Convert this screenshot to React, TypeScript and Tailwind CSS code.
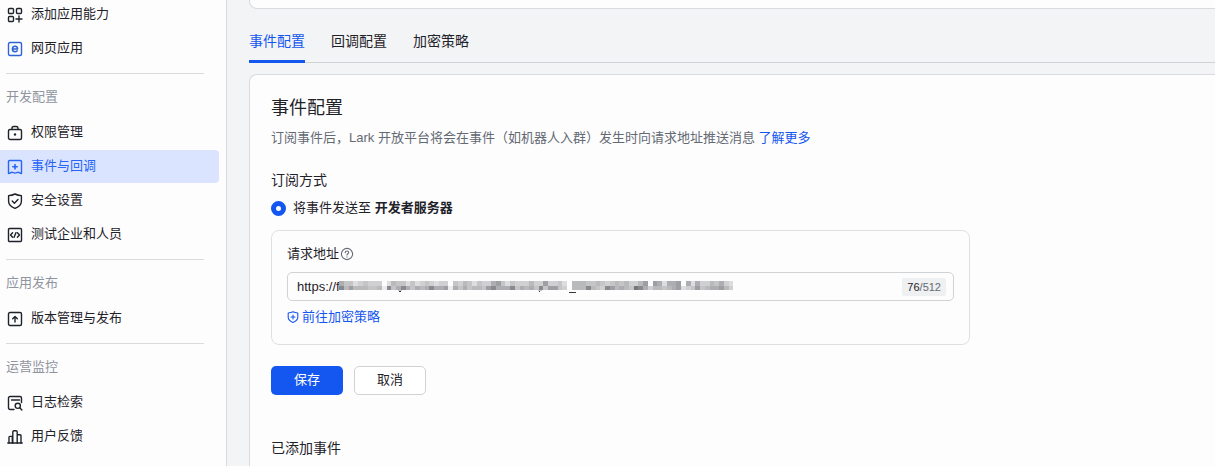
import { useState } from 'react';
import type { ReactNode } from 'react';

type NavItem = { label: string; icon: ReactNode; color?: string };

const icons = {
  add: (
    <>
      <rect x="1.5" y="1.5" width="5" height="5" rx="1" />
      <rect x="9.5" y="1.5" width="5" height="5" rx="1" />
      <rect x="1.5" y="9.5" width="5" height="5" rx="1" />
      <path d="M12 9v6M9 12h6" />
    </>
  ),
  web: (
    <>
      <rect x="1.5" y="1.5" width="13" height="13" rx="1.5" />
      <path d="M5.4 8h5.2c0-1.700-1-2.700-2.600-2.700S5.400 6.400 5.400 8s1 2.700 2.700 2.700c.9 0 1.600-.3 2.100-.9" strokeWidth="1.6" />
    </>
  ),
  permission: (
    <>
      <rect x="1.5" y="4.5" width="13" height="10" rx="1.5" />
      <path d="M5 4.5V3.200C5 2 5.800 1.500 6.800 1.500h2.400C10.200 1.500 11 2 11 3.200v1.300" />
      <circle cx="8" cy="9.500" r="1.200" fill="currentColor" stroke="none" />
    </>
  ),
  event: (
    <>
      <path d="M2.500 1.500h11a1 1 0 0 1 1 1v12c-1.600 0-2-1.200-3.200-1.200-1.400 0-1.800.8-3.300.8s-1.900-.8-3.300-.8c-1.200 0-1.600 1.200-3.200 1.200v-12a1 1 0 0 1 1-1z" />
      <path d="M8 5.500v4.400M5.800 7.700h4.400" strokeWidth="1.600" />
    </>
  ),
  shield: (
    <>
      <path d="M8 1c2 1 4.200 1.500 6.400 1.600v5.600c0 3.200-2.700 5.600-6.400 7.200-3.700-1.600-6.400-4-6.400-7.200V2.600C3.800 2.500 6 2 8 1z" />
      <path d="M5.200 8l2.200 2.200 3.600-3.800" />
    </>
  ),
  test: (
    <>
      <rect x="1.500" y="1.500" width="13" height="13" rx="1" />
      <path d="M5.600 5.700L3.500 8l2.100 2.300M10.400 5.700L12.500 8l-2.100 2.300M8.900 5.700l-1.800 4.600" />
    </>
  ),
  release: (
    <>
      <rect x="1.500" y="1.500" width="13" height="13" rx="1.500" />
      <path d="M8 11V5.500M5.700 7.700L8 5.400l2.300 2.300" />
    </>
  ),
  log: (
    <>
      <path d="M7 14.500H3A1.500 1.500 0 0 1 1.500 13V3A1.500 1.500 0 0 1 3 1.500h10A1.500 1.500 0 0 1 14.500 3v4.500M4.500 5h8" />
      <circle cx="10.800" cy="10.800" r="2.600" />
      <path d="M12.700 12.700l2.200 2.200" />
    </>
  ),
  feedback: (
    <>
      <path d="M.8 14h14.400" />
      <path d="M2 14V8.200c0-.5.3-.8.800-.8h2.500V14M5.800 14V3c0-.8.5-1.200 1.200-1.200h2c.7 0 1.200.4 1.200 1.200v11M10.500 5.800h2.700c.5 0 .8.300.8.800V14" />
    </>
  ),
};

const groups: { title?: string; items: NavItem[] }[] = [
  {
    items: [
      { label: '添加应用能力', icon: icons.add },
      { label: '网页应用', icon: icons.web, color: 'text-[#2f62d4]' },
    ],
  },
  {
    title: '开发配置',
    items: [
      { label: '权限管理', icon: icons.permission },
      { label: '事件与回调', icon: icons.event },
      { label: '安全设置', icon: icons.shield },
      { label: '测试企业和人员', icon: icons.test },
    ],
  },
  {
    title: '应用发布',
    items: [{ label: '版本管理与发布', icon: icons.release }],
  },
  {
    title: '运营监控',
    items: [
      { label: '日志检索', icon: icons.log },
      { label: '用户反馈', icon: icons.feedback },
    ],
  },
];

const tabs = ['事件配置', '回调配置', '加密策略'];

// Grey levels for the masked part of the URL, one digit per cell
const shades = ['none', '#ececee', '#dddde0', '#d0d0d2', '#c5c5c7', '#b9babc', '#adaeb1', '#9e9fa3', '#898a8e', '#76777b'];
const maskRows = [
  '64423433302544242343233043542433674243335337334205554454345453357076266706263354632',
  '85755544518468646568667164645547866684656484774305558543875654986355456723474566753',
];

function Icon({ children }: { children: ReactNode }) {
  return (
    <svg
      className="size-4 shrink-0"
      viewBox="0 0 16 16"
      fill="none"
      stroke="currentColor"
      strokeWidth="1.4"
      strokeLinecap="round"
      strokeLinejoin="round"
      aria-hidden="true"
    >
      {children}
    </svg>
  );
}

function UrlMask() {
  return (
    <svg
      className="pointer-events-none absolute left-[51px] top-2 h-3 w-[396px]"
      viewBox="0 0 396 12"
      aria-hidden="true"
    >
      <g shapeRendering="crispEdges">
        {maskRows.map((row, y) =>
          row.split('').map((level, x) => (
            <rect key={`${x}-${y}`} x={x * 4.75} y={y === 0 ? 0 : 5} width="4.75" height={y === 0 ? 5 : 4} fill={shades[Number(level)]} />
          ))
        )}
        <path d="M59 9h4v1h-4zM199 9h4v1h-4z" fill="#c5c5c7" />
        <path d="M60 10h2v1h-2zM200 10h1v1h-1zM230 11h7v1h-7z" fill="#33353a" />
      </g>
    </svg>
  );
}

export default function App() {
  const [active, setActive] = useState('事件配置');
  const [url, setUrl] = useState('https://f');

  return (
    <div className="flex min-h-screen overflow-hidden bg-[#f3f4f6] font-['Liberation_Sans','Noto_Sans_CJK_SC',sans-serif] text-[13px] leading-5 text-[#1f2329]">
      {/* Sidebar */}
      <nav className="w-[227px] shrink-0 border-r border-[#d9dbde] bg-[#fdfdfe]">
        <div className="-mt-0.5">
          {groups.map((group, i) => (
            <div key={i}>
              {group.title && (
                <>
                  <hr className="mt-2 mr-[22px] ml-1.5 border-[#d9dbde]" />
                  <h2 className="flex h-[42px] items-center pt-1 pl-1.5 text-[#8f959e]">{group.title}</h2>
                </>
              )}
              <ul className="flex flex-col gap-px">
                {group.items.map((item) => {
                  const current = item.label === '事件与回调';
                  return (
                    <li key={item.label}>
                      <a
                        href="#"
                        aria-current={current ? 'page' : undefined}
                        className={`mr-[7px] flex h-[33px] items-center gap-2 rounded-r pb-0.5 pl-[7px] ${
                          current ? 'bg-[#dae4ff] text-[#2864f5]' : ''
                        }`}
                      >
                        <span className={`pt-0.5 ${item.color ?? ''}`}>
                          <Icon>{item.icon}</Icon>
                        </span>
                        {item.label}
                      </a>
                    </li>
                  );
                })}
              </ul>
            </div>
          ))}
        </div>
      </nav>

      {/* Content */}
      <main className="flex min-w-0 flex-1 flex-col pl-[22px]">
        <div className="h-[9px] shrink-0 rounded-bl-lg border-b border-l border-[#d9dbde] bg-[#fdfdfe]" />

        <div role="tablist" className="flex h-[54px] shrink-0 items-end gap-[26px] border-b border-[#d0d3d6] text-[14px]">
          {tabs.map((tab) => (
            <button
              key={tab}
              role="tab"
              aria-selected={active === tab}
              onClick={() => setActive(tab)}
              className={`-mb-px h-8 rounded-t-xs border-b-3 pb-2.5 ${
                active === tab ? 'border-[#1456f0] text-[#1456f0]' : 'border-transparent'
              }`}
            >
              {tab}
            </button>
          ))}
        </div>

        <section className="mt-[11px] flex-1 rounded-tl-lg border-t border-l border-[#d9dbde] bg-[#fdfdfe] pt-[21px] pr-5 pl-[21px]">
          <h1 className="text-[18px] leading-6">事件配置</h1>
          <p className="mt-2 text-[#646a73]">
            订阅事件后，Lark 开放平台将会在事件（如机器人入群）发生时向请求地址推送消息{' '}
            <a href="#" className="text-[#1456f0]">了解更多</a>
          </p>

          <h2 className="mt-[22px] text-[14px]">订阅方式</h2>
          <label className="mt-2 flex items-center gap-[7px]">
            <input
              type="radio"
              name="mode"
              defaultChecked
              className="size-[15px] appearance-none rounded-full border-5 border-[#1456f0] bg-white"
            />
            <span>
              将事件发送至 <b>开发者服务器</b>
            </span>
          </label>

          <div className="mt-3 max-w-[699px] rounded-lg border border-[#dee0e3] px-[15px] pt-[13px] pb-[17px]">
            <div className="flex items-center gap-px">
              <label htmlFor="url">请求地址</label>
              <svg className="size-3.5 text-[#646a73]" viewBox="0 0 14 14" fill="none" stroke="currentColor" strokeWidth="1.1" strokeLinecap="round" aria-hidden="true">
                <circle cx="7" cy="7" r="5.600" />
                <path d="M5.300 5.700c0-1 .7-1.700 1.700-1.700s1.700.6 1.700 1.500c0 1.200-1.700 1.200-1.700 2.400M7 9.900v.1" />
              </svg>
            </div>
            <div className="relative mt-2 flex h-[29px] items-center rounded-[5px] border border-[#d0d3d6] pr-[7px] pl-[9px]">
              <input
                id="url"
                value={url}
                onChange={(e) => setUrl(e.target.value)}
                className="min-w-0 flex-1 bg-transparent outline-none"
              />
              <UrlMask />
              <span className="rounded-xs bg-[#eff0f1] px-[5px] text-[11px] leading-[18px] text-[#646a73]">
                <span className="text-[#1f2329]">76</span>/512
              </span>
            </div>
            <a href="#" className="mt-1.5 flex items-center gap-[3px] text-[#1456f0]">
              <svg className="size-3" viewBox="0 0 12 12" fill="none" stroke="currentColor" strokeWidth="1.1" strokeLinecap="round" strokeLinejoin="round" aria-hidden="true">
                <path d="M6 .8c1.500.8 3.200 1.100 4.800 1.200v4.200c0 2.300-2 4-4.800 5.200C3.200 10.200 1.200 8.500 1.200 6.200V2C2.800 1.900 4.500 1.600 6 .8z" />
                <path d="M6 4v4M4 6h4" />
              </svg>
              前往加密策略
            </a>
          </div>

          <div className="mt-[21px] flex gap-[11px]">
            <button className="h-[29px] w-[72px] rounded-[5px] bg-[#1456f0] pb-px text-white">保存</button>
            <button className="h-[29px] w-[72px] rounded-[5px] border border-[#d0d3d6] bg-white pb-px">取消</button>
          </div>

          <h2 className="mt-[43px] text-[14px]">已添加事件</h2>
        </section>
      </main>
    </div>
  );
}
